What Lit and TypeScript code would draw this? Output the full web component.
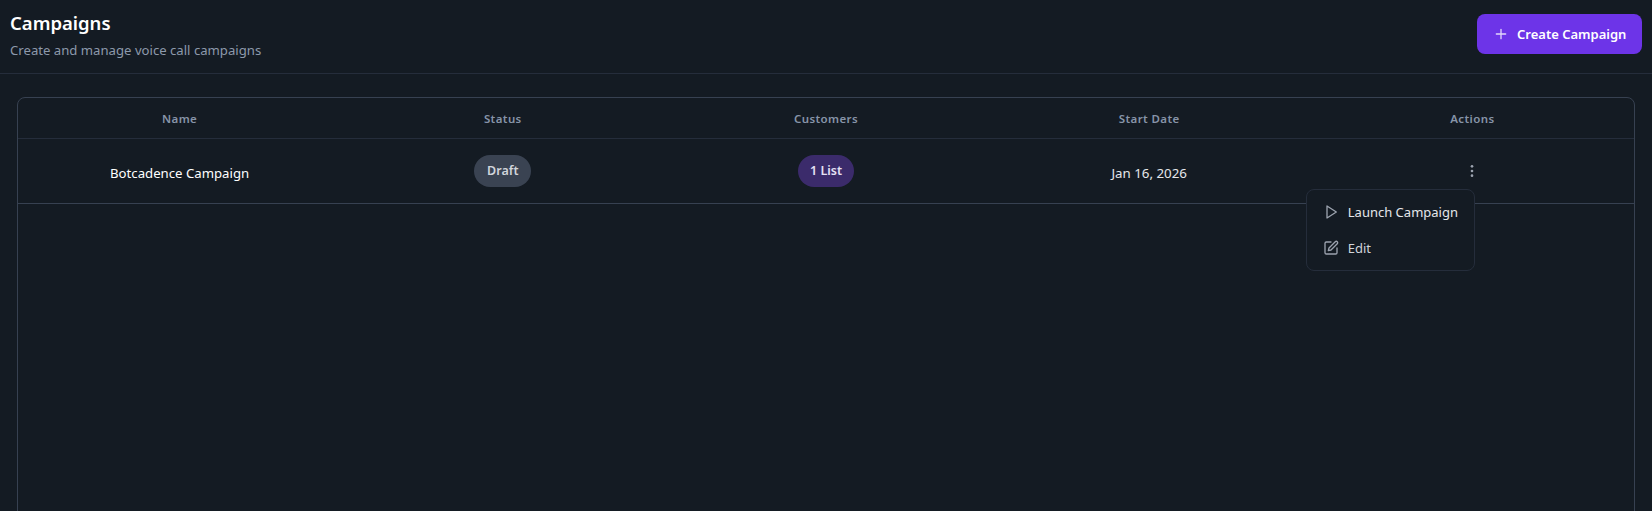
import {css, html, LitElement} from 'lit';
import {customElement} from 'lit/decorators.js';

@customElement('app-root')
export class AppRoot extends LitElement {
  static override styles = css`
    :host {
      display: block;
      height: 511px;
      overflow: hidden;
      background-color: #141b23;
      color: #fff;
      font-family: 'Noto Sans', 'Open Sans', sans-serif;
    }

    .header {
      display: flex;
      align-items: flex-start;
      justify-content: space-between;
      box-sizing: border-box;
      height: 74px;
      padding: 14px 10px 0;
      border-bottom: 1px solid #252d3b;
    }

    h1 {
      margin: -1px 0 0;
      font-size: 18.5px;
      font-weight: 600;
      line-height: 20px;
    }

    .subtitle {
      margin: 7px 0 0;
      color: #8d99ab;
      font-size: 13.15px;
      line-height: 20px;
    }

    .create {
      display: flex;
      align-items: center;
      gap: 8px;
      box-sizing: border-box;
      width: 165px;
      height: 40px;
      padding: 0 16px;
      border: 0;
      border-radius: 8px;
      background-color: #6d34e8;
      color: #fff;
      font: inherit;
      font-size: 13px;
      font-weight: 600;
      white-space: nowrap;
    }

    .create svg {
      flex: none;
      opacity: 0.8;
    }

    .content {
      padding: 23px 17px 0;
    }

    .table {
      box-sizing: border-box;
      height: 520px;
      border: 1px solid #374151;
      border-radius: 8px;
    }

    .row {
      display: grid;
      grid-template-columns: repeat(5, 1fr);
      align-items: center;
      text-align: center;
    }

    .head {
      height: 40px;
      border-bottom: 1px solid #252d3b;
      color: #8794a8;
      font-size: 11.5px;
      font-weight: 600;
      letter-spacing: 0.4px;
    }

    .body {
      box-sizing: border-box;
      height: 65px;
      padding-top: 3px;
      border-bottom: 1px solid #374151;
      font-size: 13.3px;
    }

    .name {
      font-size: 13.2px;
      font-weight: 400;
    }

    .date {
      color: #e5e7eb;
    }

    .badge {
      display: inline-block;
      margin-bottom: 4px;
      padding: 0 13px;
      border-radius: 16px;
      font-size: 12.5px;
      font-weight: 600;
      line-height: 32px;
    }

    .draft {
      background-color: #3a4352;
      color: #d1d5db;
    }

    .list {
      padding: 0 12px;
      background-color: #3b2b6b;
      color: #e5e0f5;
    }

    .actions {
      position: relative;
    }

    .kebab {
      display: block;
      margin: 0 auto 4px;
      color: #9ca3af;
    }

    .menu {
      position: absolute;
      top: 26px;
      left: -5px;
      z-index: 1;
      box-sizing: border-box;
      width: 169px;
      height: 82px;
      padding: 4px 0;
      border: 1px solid #252d3b;
      border-radius: 8px;
      background-color: #141b23;
      text-align: left;
    }

    .item {
      display: flex;
      align-items: center;
      gap: 9px;
      height: 36px;
      padding: 0 10px 0 16px;
      color: #d1d5db;
      font-size: 13px;
      white-space: nowrap;
    }

    .launch {
      color: #e5e7eb;
    }

    .item svg {
      flex: none;
      color: #9ca3af;
    }
  `;

  override render() {
    return html`
      <div class="header">
        <div>
          <h1>Campaigns</h1>
          <p class="subtitle">Create and manage voice call campaigns</p>
        </div>
        <button class="create">
          <svg width="16" height="16" viewBox="0 0 24 24" fill="none" stroke="currentColor" stroke-width="2" stroke-linecap="round">
            <path d="M5 12h14M12 5v14" />
          </svg>
          Create Campaign
        </button>
      </div>
      <div class="content">
        <div class="table">
          <div class="row head">
            <div>Name</div>
            <div>Status</div>
            <div>Customers</div>
            <div>Start Date</div>
            <div>Actions</div>
          </div>
          <div class="row body">
            <div class="name">Botcadence Campaign</div>
            <div><span class="badge draft">Draft</span></div>
            <div><span class="badge list">1 List</span></div>
            <div class="date">Jan 16, 2026</div>
            <div class="actions">
              <svg class="kebab" width="16" height="16" viewBox="0 0 24 24" fill="currentColor">
                <circle cx="12" cy="5" r="2" />
                <circle cx="12" cy="12" r="2" />
                <circle cx="12" cy="19" r="2" />
              </svg>
              <div class="menu">
                <div class="item launch">
                  <svg width="16" height="16" viewBox="0 0 24 24" fill="none" stroke="currentColor" stroke-width="2" stroke-linejoin="round">
                    <path d="M6 3l14 9-14 9V3z" />
                  </svg>
                  Launch Campaign
                </div>
                <div class="item">
                  <svg width="16" height="16" viewBox="0 0 24 24" fill="none" stroke="currentColor" stroke-width="2" stroke-linecap="round" stroke-linejoin="round">
                    <path d="M12 3H5a2 2 0 0 0-2 2v14a2 2 0 0 0 2 2h14a2 2 0 0 0 2-2v-7" />
                    <path d="M18.4 2.6a2.1 2.1 0 0 1 3 3L12 15l-4 1 1-4z" />
                  </svg>
                  Edit
                </div>
              </div>
            </div>
          </div>
        </div>
      </div>
    `;
  }
}

declare global {
  interface HTMLElementTagNameMap {
    'app-root': AppRoot;
  }
}
